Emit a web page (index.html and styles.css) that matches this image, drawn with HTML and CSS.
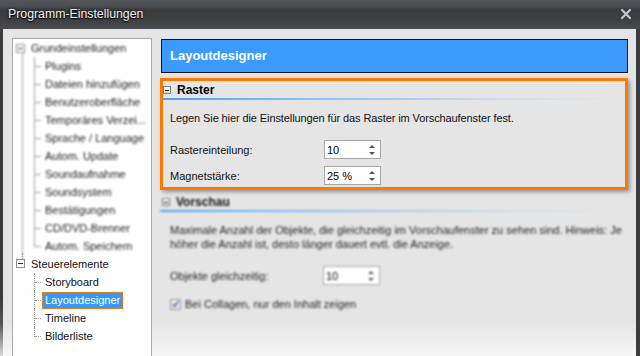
FILE: index.html
```html
<!DOCTYPE html>
<html lang="de">
<head>
<meta charset="utf-8">
<title>Programm-Einstellungen</title>
<link rel="stylesheet" href="styles.css">
</head>
<body>
<div class="window">
  <div class="titlebar">
    <span class="title">Programm-Einstellungen</span>
    <svg class="close" width="10" height="10" viewBox="0 0 10 10"><path d="M1 1 L9 9 M9 1 L1 9" stroke="#c3c7ce" stroke-width="2.2" stroke-linecap="square"/></svg>
  </div>
  <div class="content">
    <div class="tree">
      <div class="tgroup first blur">
        <div class="trow root"><span class="pm"></span>Grundeinstellungen</div>
        <div class="tkids">
          <div class="trow kid">Plugins</div>
          <div class="trow kid">Dateien hinzufügen</div>
          <div class="trow kid">Benutzeroberfläche</div>
          <div class="trow kid">Temporäres Verzei...</div>
          <div class="trow kid">Sprache / Language</div>
          <div class="trow kid">Autom. Update</div>
          <div class="trow kid">Soundaufnahme</div>
          <div class="trow kid">Soundsystem</div>
          <div class="trow kid">Bestätigungen</div>
          <div class="trow kid">CD/DVD-Brenner</div>
          <div class="trow kid">Autom. Speichern</div>
        </div>
      </div>
      <div class="tgroup">
        <div class="trow root"><span class="pm"></span>Steuerelemente</div>
        <div class="tkids dotted">
          <div class="trow kid">Storyboard</div>
          <div class="trow kid"><span class="sel">Layoutdesigner</span></div>
          <div class="trow kid">Timeline</div>
          <div class="trow kid">Bilderliste</div>
        </div>
      </div>
    </div>
    <div class="panel">
      <div class="panel-head">Layoutdesigner</div>
      <div class="section highlight">
        <div class="sec-head"><span class="box-minus"></span>Raster</div>
        <div class="sec-line"></div>
        <div class="sec-body">
          <p class="desc">Legen Sie hier die Einstellungen für das Raster im Vorschaufenster fest.</p>
          <div class="field first-field">
            <span class="label">Rastereinteilung:</span>
            <span class="spin"><span class="val">10</span><span class="arrows"><i class="up"></i><i class="down"></i></span></span>
          </div>
          <div class="field">
            <span class="label">Magnetstärke:</span>
            <span class="spin"><span class="val">25 %</span><span class="arrows"><i class="up"></i><i class="down"></i></span></span>
          </div>
        </div>
      </div>
      <div class="section plain blur">
        <div class="sec-head"><span class="box-minus"></span>Vorschau</div>
        <div class="sec-line"></div>
        <div class="sec-body">
          <p class="desc">Maximale Anzahl der Objekte, die gleichzeitig im Vorschaufenster zu sehen sind. Hinweis: Je<br>höher die Anzahl ist, desto länger dauert evtl. die Anzeige.</p>
          <div class="field first-field">
            <span class="label">Objekte gleichzeitig:</span>
            <span class="spin"><span class="val">10</span><span class="arrows"><i class="up"></i><i class="down"></i></span></span>
          </div>
          <div class="check-row">
            <span class="checkbox"><svg width="10" height="10" viewBox="0 0 10 10"><path d="M2 5 L4 7.5 L8.5 1.5" fill="none" stroke="#3b6cb4" stroke-width="1.6"/></svg></span>
            <span>Bei Collagen, nur den Inhalt zeigen</span>
          </div>
        </div>
      </div>
    </div>
  </div>
</div>
</body>
</html>
```

FILE: styles.css
```css
* { box-sizing: border-box; }
html, body { margin: 0; padding: 0; }
body {
  width: 640px;
  height: 356px;
  overflow: hidden;
  font-family: "Liberation Sans", Arial, sans-serif;
  font-size: 11px;
  color: #111;
  background: #3b3c40;
}
.window {
  height: 356px;
  display: flex;
  flex-direction: column;
  background: linear-gradient(90deg, transparent 3px, #3b3c40 3px),
              linear-gradient(#3b3c40 300px, #5a5a5c 325px, #d8d8d8 356px);
}
.titlebar {
  flex: none;
  height: 29px;
  display: flex;
  align-items: center;
  justify-content: space-between;
  padding: 0 9px 1px 8px;
  background: linear-gradient(#55565a 0, #4c4d51 7px, #3b3c40 9px, #3d3e42 18px, #47484c 28px, #4a4b4f 29px);
}
.title {
  color: #f4f4f4;
  font-size: 12.3px;
  text-shadow: 0 0 3px #000, 0 1px 1px #000;
}
.close { display: block; }
.content {
  flex: 1;
  display: flex;
  gap: 9px;
  margin: 0 4px 0 3px;
  padding: 9px 8px 0 9px;
  background: linear-gradient(#e5e5e5 292px, #f6f6f6 327px);
  overflow: hidden;
}
.tree {
  flex: none;
  width: 140px;
  background: #fff;
  border: 1px solid #a9a9a9;
  border-bottom: none;
  padding-left: 1px;
}
.tgroup { position: relative; }
.tgroup.first::before {
  content: "";
  position: absolute;
  left: 8px;
  top: 14px;
  bottom: -5px;
  border-left: 1px solid #a0a0a0;
}
.blur { filter: blur(0.95px); }
.tgroup.blur { color: #1a1a1a; }
.trow {
  position: relative;
  height: 18px;
  line-height: 18px;
  white-space: nowrap;
}
.root { padding-left: 17px; }
.pm {
  position: absolute;
  left: 2px;
  top: 5px;
  width: 9px;
  height: 9px;
  border: 1px solid #8f8f8f;
  background: #fff;
}
.pm::after {
  content: "";
  position: absolute;
  left: 1px;
  right: 1px;
  top: 3px;
  border-top: 1px solid #333;
}
.tgroup:not(.first) .pm { top: 4px; }
.tgroup:not(.first) .trow.root::before {
  content: "";
  position: absolute;
  left: 8px;
  top: -2px;
  height: 6px;
  border-left: 1px dotted #999;
}
.kid { padding-left: 31px; }
.kid::before {
  content: "";
  position: absolute;
  left: 20px;
  top: 0;
  bottom: 0;
  border-left: 1px solid #a0a0a0;
}
.kid:last-child::before { bottom: 8px; }
.kid::after {
  content: "";
  position: absolute;
  left: 21px;
  top: 9px;
  width: 6px;
  border-top: 1px solid #a0a0a0;
}
.dotted .kid::before { border-left: 1px dotted #9a9a9a; }
.dotted .kid::after { border-top: 1px dotted #9a9a9a; }
.sel {
  display: inline-block;
  margin-left: -3px;
  padding: 0 2px 0 2px;
  height: 17px;
  line-height: 15px;
  background: #3399ff;
  color: #fff;
  border: 1px dotted #f08a24;
}

.panel {
  flex: 1;
  display: flex;
  flex-direction: column;
  min-width: 0;
  margin-top: 1px;
}
.panel-head {
  height: 34px;
  background: #3a9bfc;
  border: 1px solid #111;
  color: #fff;
  font-weight: bold;
  font-size: 13px;
  line-height: 31px;
  padding-left: 8px;
}
.section.highlight {
  margin: 5px 0 0 -1px;
  border: 3px solid #ff7800;
  box-shadow: 2px 2px 4px rgba(0,0,0,0.35);
  height: 112px;
}
.section.plain {
  margin: 3px 0 0 -1px;
  color: #1e1e1e;
}
.sec-head {
  display: flex;
  align-items: center;
  gap: 6px;
  height: 17px;
  font-weight: bold;
  font-size: 12px;
  color: #000;
}
.plain .sec-head { padding-left: 2px; color: #111; }
.box-minus {
  position: relative;
  width: 8px;
  height: 8px;
  border: 1px solid #7f7f7f;
  background: linear-gradient(#ffffff, #dcdcdc);
}
.box-minus::after {
  content: "";
  position: absolute;
  left: 1px;
  right: 1px;
  top: 3px;
  border-top: 1px solid #222;
}
.sec-line {
  height: 2px;
  margin-right: 6px;
  background: linear-gradient(90deg, #4aa2f7 0%, #8cc2f5 35%, #c9dff3 75%, rgba(229,229,229,0) 100%);
}
.sec-body { padding: 11px 0 0 7px; }
.plain .sec-body { padding: 12px 0 0 10px; }
.desc {
  margin: 0;
  line-height: 14px;
}
.highlight .desc { letter-spacing: -0.1px; }
.plain .desc { line-height: 13.5px; }
.field {
  display: flex;
  align-items: center;
  height: 19px;
  margin-top: 7px;
}
.field.first-field { margin-top: 15px; }
.label { width: 154px; flex: none; }
.plain .label { width: 153px; }
.spin {
  display: flex;
  align-items: center;
  justify-content: space-between;
  width: 57px;
  height: 19px;
  background: #fff;
  border: 1px solid #a7a7a7;
  padding: 0 5px 0 2px;
  color: #000;
}
.arrows {
  display: flex;
  flex-direction: column;
  gap: 4px;
}
.arrows i {
  display: block;
  width: 0;
  height: 0;
  border-left: 3px solid transparent;
  border-right: 3px solid transparent;
}
.arrows .up { border-bottom: 3px solid #555; }
.arrows .down { border-top: 3px solid #555; }
.check-row {
  display: flex;
  align-items: center;
  gap: 4px;
  margin-top: 12px;
  height: 14px;
}
.checkbox {
  width: 11px;
  height: 11px;
  border: 1px solid #9a9a9a;
  background: linear-gradient(#f4f4f4, #dedede);
  display: flex;
  align-items: center;
  justify-content: center;
}
.checkbox svg { display: block; }
```
